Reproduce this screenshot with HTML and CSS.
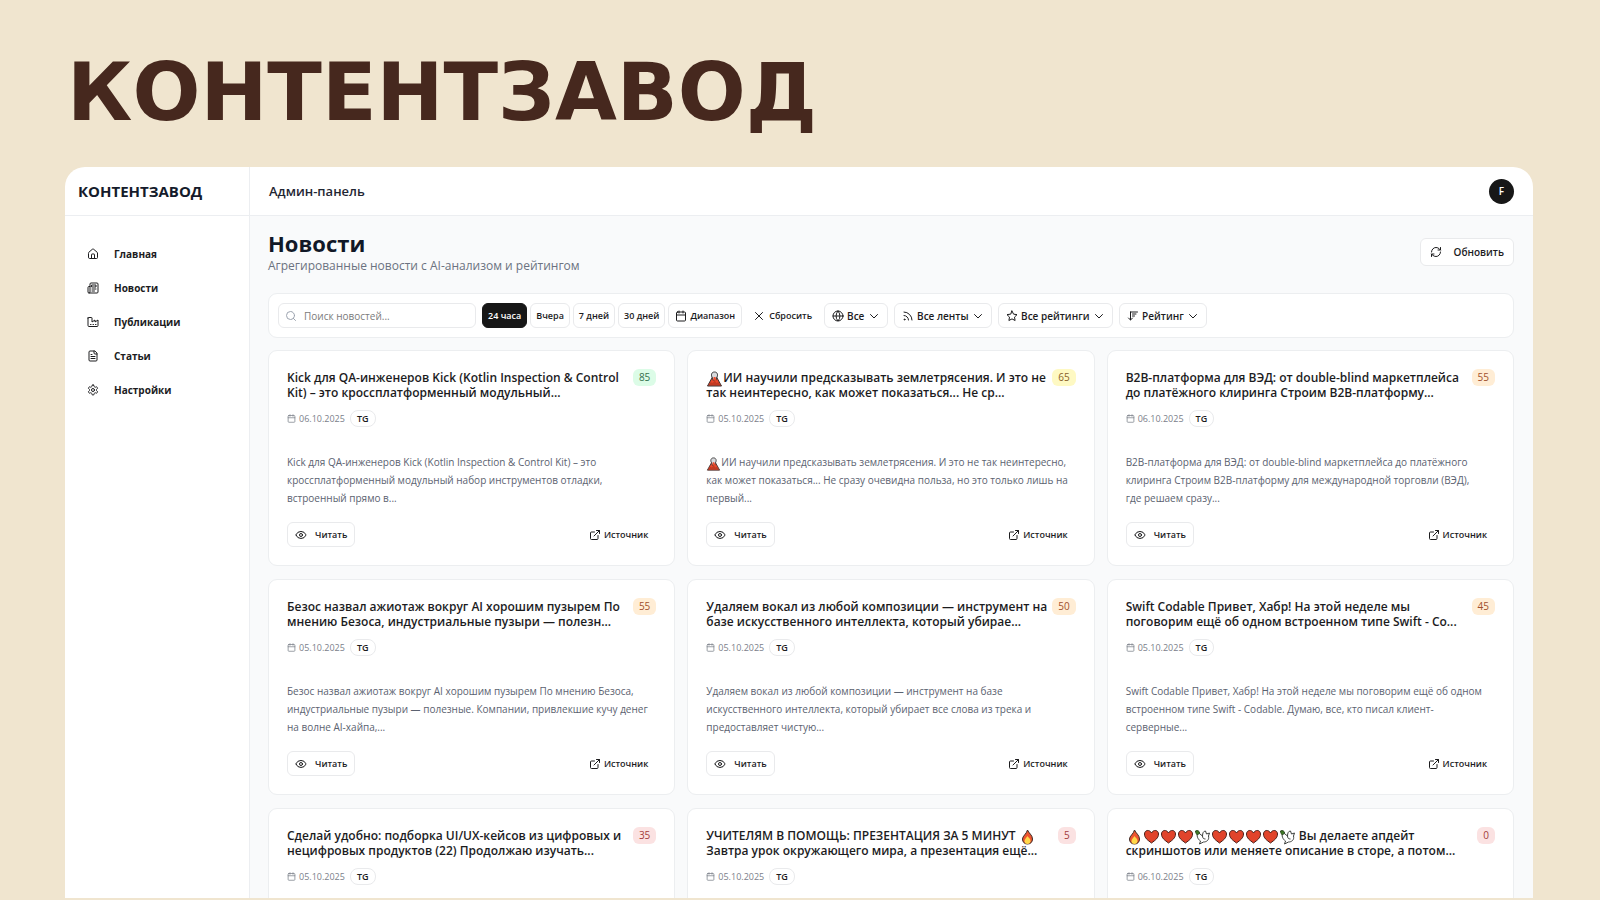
FILE: index.html
```html
<!DOCTYPE html>
<html lang="ru">
<head>
<meta charset="utf-8">
<meta name="viewport" content="width=device-width, initial-scale=1">
<title>Контентзавод</title>
<link rel="stylesheet" href="styles.css">
</head>
<body>
<svg class="sprite" aria-hidden="true">
  <symbol id="home" viewBox="0 0 24 24"><path d="M15 21v-8a1 1 0 0 0-1-1h-4a1 1 0 0 0-1 1v8"/><path d="M3 10a2 2 0 0 1 .7-1.500l7-6a2 2 0 0 1 2.600 0l7 6A2 2 0 0 1 21 10v9a2 2 0 0 1-2 2H5a2 2 0 0 1-2-2z"/></symbol>
  <symbol id="news" viewBox="0 0 24 24"><path d="M4 22h16a2 2 0 0 0 2-2V4a2 2 0 0 0-2-2H8a2 2 0 0 0-2 2v16a2 2 0 0 1-4 0v-9a2 2 0 0 1 2-2h2M18 14h-8M15 18h-5M10 6h8v4h-8z"/></symbol>
  <symbol id="factory" viewBox="0 0 24 24"><path d="M2 4v15a2 2 0 0 0 2 2h16a2 2 0 0 0 2-2V8l-6 4V8l-6 4V4a1 1 0 0 0-1-1H3a1 1 0 0 0-1 1zM17 17h1M12 17h1M7 17h1"/></symbol>
  <symbol id="file" viewBox="0 0 24 24"><path d="M15 2H6a2 2 0 0 0-2 2v16a2 2 0 0 0 2 2h12a2 2 0 0 0 2-2V7zM14 2v4a2 2 0 0 0 2 2h4M10 9H8M16 13H8M16 17H8"/></symbol>
  <symbol id="gear" viewBox="0 0 24 24"><path d="M12.220 2h-.44a2 2 0 0 0-2 2v.18a2 2 0 0 1-1 1.730l-.43.250a2 2 0 0 1-2 0l-.15-.08a2 2 0 0 0-2.730.730l-.22.380a2 2 0 0 0 .73 2.730l.15.100a2 2 0 0 1 1 1.720v.51a2 2 0 0 1-1 1.740l-.15.090a2 2 0 0 0-.73 2.730l.22.380a2 2 0 0 0 2.730.730l.15-.08a2 2 0 0 1 2 0l.43.250a2 2 0 0 1 1 1.730V20a2 2 0 0 0 2 2h.44a2 2 0 0 0 2-2v-.18a2 2 0 0 1 1-1.730l.43-.25a2 2 0 0 1 2 0l.15.080a2 2 0 0 0 2.730-.73l.22-.39a2 2 0 0 0-.73-2.730l-.15-.08a2 2 0 0 1-1-1.740v-.5a2 2 0 0 1 1-1.740l.15-.09a2 2 0 0 0 .73-2.730l-.22-.38a2 2 0 0 0-2.730-.73l-.15.080a2 2 0 0 1-2 0l-.43-.25a2 2 0 0 1-1-1.730V4a2 2 0 0 0-2-2z"/><circle cx="12" cy="12" r="3"/></symbol>
  <symbol id="refresh" viewBox="0 0 24 24"><path d="M3 12a9 9 0 0 1 9-9 9.750 9.750 0 0 1 6.740 2.740L21 8M21 3v5h-5M21 12a9 9 0 0 1-9 9 9.750 9.750 0 0 1-6.740-2.740L3 16M8 16H3v5"/></symbol>
  <symbol id="search" viewBox="0 0 24 24"><circle cx="11" cy="11" r="8"/><path d="m21 21-4.300-4.300"/></symbol>
  <symbol id="calendar" viewBox="0 0 24 24"><path d="M8 2v4M16 2v4M3 10h18"/><rect x="3" y="4" width="18" height="18" rx="2"/></symbol>
  <symbol id="close" viewBox="0 0 24 24"><path d="M19 5 5 19M5 5l14 14"/></symbol>
  <symbol id="globe" viewBox="0 0 24 24"><circle cx="12" cy="12" r="10"/><path d="M12 2a14.500 14.500 0 0 0 0 20 14.500 14.500 0 0 0 0-20M2 12h20"/></symbol>
  <symbol id="rss" viewBox="0 0 24 24"><path d="M4 11a9 9 0 0 1 9 9M4 4a16 16 0 0 1 16 16"/><circle cx="5" cy="19" r="1"/></symbol>
  <symbol id="star" viewBox="0 0 24 24"><path d="m12 2 3.100 6.300 6.900 1-5 4.900 1.200 6.800-6.200-3.200L5.800 21 7 14.200 2 9.300l6.900-1z"/></symbol>
  <symbol id="sort" viewBox="0 0 24 24"><path d="m3 16 4 4 4-4M7 20V4M7 4h14M11 8h7M11 12h4"/></symbol>
  <symbol id="chevron" viewBox="0 0 24 24"><path d="m5 9 7 7 7-7"/></symbol>
  <symbol id="eye" viewBox="0 0 24 24"><path d="M2 12.300a1 1 0 0 1 0-.7 10.750 10.750 0 0 1 19.900 0 1 1 0 0 1 0 .7 10.750 10.750 0 0 1-19.900 0"/><circle cx="12" cy="12" r="3"/></symbol>
  <symbol id="external" viewBox="0 0 24 24"><path d="M15 3h6v6M10 14 21 3M18 13v6a2 2 0 0 1-2 2H5a2 2 0 0 1-2-2V8a2 2 0 0 1 2-2h6"/></symbol>
  <symbol id="volcano" viewBox="0 0 16 16"><path d="M1 15 6 6h4l5 9z" fill="#e8472b" stroke="#3a3232"/><path d="M2 14h12l-2-3-2 1-2-3-2 3-2-1z" fill="#c23a22" stroke="none"/><path d="M6 7c-2-3-1-6 2-6s4 3 2 6l-1 3-1-2-1 2z" fill="#d8dadd" stroke="#333"/><path d="M7 6h2l1 5-2-2-1 3z" fill="#f04c2c" stroke="none"/></symbol>
  <symbol id="fire" viewBox="0 0 16 16"><path d="M8 1c1 3 5 5 5 9 0 3-2 5-5 5s-5-2-5-5c0-3 4-5 5-9z" fill="#ee5530" stroke="#3b2b25"/><path d="M8 7c1 2 3 2 3 5 0 1-1 3-3 3s-3-1-3-3c0-2 2-3 3-5z" fill="#ffd84a" stroke="none"/></symbol>
  <symbol id="heart" viewBox="0 0 16 16"><path d="M8 14C4 11 1 9 1 5c0-4 5-5 7-1 2-4 7-3 7 1 0 4-3 6-7 9z" fill="#e1442b" stroke="#4a211a"/></symbol>
  <symbol id="dove" viewBox="0 0 16 16"><path d="M3 3l5 4c0-3 1-5 3-5l1 3 3-1-1 3c1 4-2 6-5 6l-4 2 1-3c-3-2-4-5-3-9z" fill="#fff" stroke="#3d403d"/><path d="M1 2c2-1 4 0 4 2L3 6C2 5 1 4 1 2z" fill="#3f7c25" stroke="#2c4820"/><path d="M8 7c0 2 1 3 3 3" fill="none" stroke="#3d403d"/></symbol>
</svg>

<h1 class="poster-title">КОНТЕНТЗАВОД</h1>

<div class="app">
  <aside class="sidebar">
    <div class="brand">КОНТЕНТЗАВОД</div>
    <nav class="nav">
      <a href="#"><svg class="icon"><use href="#home"/></svg>Главная</a>
      <a href="#"><svg class="icon"><use href="#news"/></svg>Новости</a>
      <a href="#"><svg class="icon"><use href="#factory"/></svg>Публикации</a>
      <a href="#"><svg class="icon"><use href="#file"/></svg>Статьи</a>
      <a href="#"><svg class="icon"><use href="#gear"/></svg>Настройки</a>
    </nav>
  </aside>

  <div class="workspace">
    <header class="topbar">
      <span class="topbar-title">Админ-панель</span>
      <button class="avatar" type="button">F</button>
    </header>
    <main class="content">
      <div class="page-head">
        <div>
          <h2>Новости</h2>
          <p>Агрегированные новости с AI-анализом и рейтингом</p>
        </div>
        <button class="btn refresh" type="button"><svg class="icon"><use href="#refresh"/></svg>Обновить</button>
      </div>

      <div class="filters">
        <label class="search"><svg class="icon"><use href="#search"/></svg><input type="text" placeholder="Поиск новостей..." aria-label="Поиск новостей"></label>
        <div class="periods">
          <button class="btn active" type="button">24 часа</button>
          <button class="btn" type="button">Вчера</button>
          <button class="btn" type="button">7 дней</button>
          <button class="btn" type="button">30 дней</button>
          <button class="btn range" type="button"><svg class="icon"><use href="#calendar"/></svg>Диапазон</button>
        </div>
        <button class="btn ghost reset" type="button"><svg class="icon"><use href="#close"/></svg>Сбросить</button>
        <div class="selects">
          <label class="pick"><svg class="icon"><use href="#globe"/></svg><select aria-label="Источники"><option>Все</option></select><svg class="icon chevron"><use href="#chevron"/></svg></label>
          <label class="pick"><svg class="icon"><use href="#rss"/></svg><select aria-label="Ленты"><option>Все ленты</option></select><svg class="icon chevron"><use href="#chevron"/></svg></label>
          <label class="pick"><svg class="icon"><use href="#star"/></svg><select aria-label="Рейтинги"><option>Все рейтинги</option></select><svg class="icon chevron"><use href="#chevron"/></svg></label>
          <label class="pick"><svg class="icon"><use href="#sort"/></svg><select aria-label="Сортировка"><option>Рейтинг</option></select><svg class="icon chevron"><use href="#chevron"/></svg></label>
        </div>
      </div>

      <section class="cards">
        <article class="card">
          <div class="card-head"><h3>Kick для QA-инженеров Kick (Kotlin Inspection &amp; Control<br>Kit) – это кроссплатформенный модульный...</h3><span class="score green">85</span></div>
          <div class="meta"><svg class="icon"><use href="#calendar"/></svg><time>06.10.2025</time><span class="chip">TG</span></div>
          <p class="excerpt">Kick для QA-инженеров Kick (Kotlin Inspection &amp; Control Kit) – это<br>кроссплатформенный модульный набор инструментов отладки,<br>встроенный прямо в...</p>
          <div class="actions"><button class="btn read" type="button"><svg class="icon"><use href="#eye"/></svg>Читать</button><a class="source" href="#"><svg class="icon"><use href="#external"/></svg>Источник</a></div>
        </article>
        <article class="card">
          <div class="card-head"><h3><svg class="emoji"><use href="#volcano"/></svg>ИИ научили предсказывать землетрясения. И это не<br>так неинтересно, как может показаться... Не ср...</h3><span class="score yellow">65</span></div>
          <div class="meta"><svg class="icon"><use href="#calendar"/></svg><time>05.10.2025</time><span class="chip">TG</span></div>
          <p class="excerpt"><svg class="emoji"><use href="#volcano"/></svg>ИИ научили предсказывать землетрясения. И это не так неинтересно,<br>как может показаться... Не сразу очевидна польза, но это только лишь на<br>первый...</p>
          <div class="actions"><button class="btn read" type="button"><svg class="icon"><use href="#eye"/></svg>Читать</button><a class="source" href="#"><svg class="icon"><use href="#external"/></svg>Источник</a></div>
        </article>
        <article class="card">
          <div class="card-head"><h3>B2B-платформа для ВЭД: от double-blind маркетплейса<br>до платёжного клиринга Строим B2B-платформу...</h3><span class="score orange">55</span></div>
          <div class="meta"><svg class="icon"><use href="#calendar"/></svg><time>06.10.2025</time><span class="chip">TG</span></div>
          <p class="excerpt">B2B-платформа для ВЭД: от double-blind маркетплейса до платёжного<br>клиринга Строим B2B-платформу для международной торговли (ВЭД),<br>где решаем сразу...</p>
          <div class="actions"><button class="btn read" type="button"><svg class="icon"><use href="#eye"/></svg>Читать</button><a class="source" href="#"><svg class="icon"><use href="#external"/></svg>Источник</a></div>
        </article>
        <article class="card">
          <div class="card-head"><h3>Безос назвал ажиотаж вокруг AI хорошим пузырем По<br>мнению Безоса, индустриальные пузыри — полезн...</h3><span class="score orange">55</span></div>
          <div class="meta"><svg class="icon"><use href="#calendar"/></svg><time>05.10.2025</time><span class="chip">TG</span></div>
          <p class="excerpt">Безос назвал ажиотаж вокруг AI хорошим пузырем По мнению Безоса,<br>индустриальные пузыри — полезные. Компании, привлекшие кучу денег<br>на волне AI-хайпа,...</p>
          <div class="actions"><button class="btn read" type="button"><svg class="icon"><use href="#eye"/></svg>Читать</button><a class="source" href="#"><svg class="icon"><use href="#external"/></svg>Источник</a></div>
        </article>
        <article class="card">
          <div class="card-head"><h3>Удаляем вокал из любой композиции — инструмент на<br>базе искусственного интеллекта, который убирае...</h3><span class="score orange">50</span></div>
          <div class="meta"><svg class="icon"><use href="#calendar"/></svg><time>05.10.2025</time><span class="chip">TG</span></div>
          <p class="excerpt">Удаляем вокал из любой композиции — инструмент на базе<br>искусственного интеллекта, который убирает все слова из трека и<br>предоставляет чистую...</p>
          <div class="actions"><button class="btn read" type="button"><svg class="icon"><use href="#eye"/></svg>Читать</button><a class="source" href="#"><svg class="icon"><use href="#external"/></svg>Источник</a></div>
        </article>
        <article class="card">
          <div class="card-head"><h3>Swift Codable Привет, Хабр! На этой неделе мы<br>поговорим ещё об одном встроенном типе Swift - Co...</h3><span class="score orange">45</span></div>
          <div class="meta"><svg class="icon"><use href="#calendar"/></svg><time>05.10.2025</time><span class="chip">TG</span></div>
          <p class="excerpt">Swift Codable Привет, Хабр! На этой неделе мы поговорим ещё об одном<br>встроенном типе Swift - Codable. Думаю, все, кто писал клиент-<br>серверные...</p>
          <div class="actions"><button class="btn read" type="button"><svg class="icon"><use href="#eye"/></svg>Читать</button><a class="source" href="#"><svg class="icon"><use href="#external"/></svg>Источник</a></div>
        </article>
        <article class="card">
          <div class="card-head"><h3>Сделай удобно: подборка UI/UX-кейсов из цифровых и<br>нецифровых продуктов (22) Продолжаю изучать...</h3><span class="score red">35</span></div>
          <div class="meta"><svg class="icon"><use href="#calendar"/></svg><time>05.10.2025</time><span class="chip">TG</span></div>
        </article>
        <article class="card">
          <div class="card-head"><h3>УЧИТЕЛЯМ В ПОМОЩЬ: ПРЕЗЕНТАЦИЯ ЗА 5 МИНУТ <svg class="emoji"><use href="#fire"/></svg><br>Завтра урок окружающего мира, а презентация ещё...</h3><span class="score red">5</span></div>
          <div class="meta"><svg class="icon"><use href="#calendar"/></svg><time>05.10.2025</time><span class="chip">TG</span></div>
        </article>
        <article class="card">
          <div class="card-head"><h3><svg class="emoji"><use href="#fire"/></svg><svg class="emoji"><use href="#heart"/></svg><svg class="emoji"><use href="#heart"/></svg><svg class="emoji"><use href="#heart"/></svg><svg class="emoji"><use href="#dove"/></svg><svg class="emoji"><use href="#heart"/></svg><svg class="emoji"><use href="#heart"/></svg><svg class="emoji"><use href="#heart"/></svg><svg class="emoji"><use href="#heart"/></svg><svg class="emoji"><use href="#dove"/></svg> Вы делаете апдейт<br>скриншотов или меняете описание в сторе, а потом...</h3><span class="score red">0</span></div>
          <div class="meta"><svg class="icon"><use href="#calendar"/></svg><time>06.10.2025</time><span class="chip">TG</span></div>
        </article>
      </section>
    </main>
  </div>
</div>
</body>
</html>
```
FILE: styles.css
```css
* { box-sizing: border-box; }

body {
  margin: 0;
  height: 100vh;
  padding: 46px 67px 2px 65px;
  display: flex;
  flex-direction: column;
  overflow: hidden;
  background: #f0e5cf;
  color: #1c1c1e;
  font-family: "Open Sans", "Noto Sans", sans-serif;
  font-size: 10px;
}

h1, h2, h3, p { margin: 0; }
a { color: inherit; text-decoration: none; }
button, input, select { font: inherit; color: inherit; }
.sprite { display: none; }

.icon {
  width: 12px;
  height: 12px;
  flex: none;
  fill: none;
  stroke: currentColor;
  stroke-width: 2;
  stroke-linecap: round;
  stroke-linejoin: round;
}

.emoji {
  width: 17px;
  height: 16px;
  margin: -2px 0;
  vertical-align: -3px;
}

.poster-title {
  height: 121px;
  padding-left: 2px;
  color: #46281e;
  font: bold 80px/94px "DejaVu Sans", sans-serif;
}

.app {
  flex: 1;
  min-height: 0;
  display: flex;
  overflow: hidden;
  background: #fff;
  border-radius: 20px 20px 0 0;
}

.sidebar {
  width: 185px;
  flex: none;
  border-right: 1px solid #eceef1;
}

.brand {
  height: 49px;
  padding-left: 13px;
  border-bottom: 1px solid #eceef1;
  color: #141b2b;
  font-size: 15px;
  font-weight: 700;
  line-height: 49px;
}

.nav { padding: 21px 12px; }

.nav a {
  height: 34px;
  padding-left: 10px;
  display: flex;
  align-items: center;
  gap: 15px;
  font-size: 10px;
  font-weight: 700;
}

.workspace {
  flex: 1;
  min-width: 0;
  display: flex;
  flex-direction: column;
}

.topbar {
  height: 49px;
  flex: none;
  padding: 0 19px 0 19px;
  display: flex;
  align-items: center;
  justify-content: space-between;
  border-bottom: 1px solid #eceef1;
}

.topbar-title {
  color: #1f2633;
  font-size: 13px;
  font-weight: 600;
}

.avatar {
  width: 25px;
  height: 25px;
  padding: 0;
  border: 0;
  border-radius: 50%;
  background: #171717;
  color: #fff;
  font-size: 10px;
  font-weight: 600;
}

.content {
  flex: 1;
  min-height: 0;
  padding: 13px 19px 0 18px;
  overflow: hidden;
  background: #f9fafb;
}

.page-head {
  display: flex;
  align-items: center;
  justify-content: space-between;
}

.page-head h2 {
  color: #111827;
  font-size: 22px;
  font-weight: 700;
  line-height: 28px;
}

.page-head p {
  color: #6b7280;
  font-size: 12px;
  line-height: 18px;
}

.btn {
  height: 25px;
  padding: 0 5px;
  display: inline-flex;
  align-items: center;
  justify-content: center;
  gap: 3px;
  border: 1px solid #e9eaec;
  border-radius: 6px;
  background: #fff;
  font-size: 9px;
  font-weight: 600;
  white-space: nowrap;
}

.btn.refresh {
  height: 28px;
  padding: 0 9px;
  gap: 12px;
  font-size: 10px;
}

.btn.active {
  border-color: #171717;
  background: #171717;
  color: #fff;
}

.btn.range { padding: 0 6px; }

.btn.ghost {
  border-color: transparent;
  background: none;
}

.filters {
  margin: 18px 0 12px;
  padding: 9px;
  display: flex;
  align-items: center;
  border: 1px solid #eceef0;
  border-radius: 9px;
  background: #fff;
}

.search {
  width: 198px;
  height: 25px;
  margin-right: 6px;
  padding: 0 6px;
  display: flex;
  align-items: center;
  gap: 7px;
  border: 1px solid #e9eaec;
  border-radius: 6px;
  color: #9ca3af;
}

.search input {
  width: 100%;
  min-width: 0;
  padding: 0;
  border: 0;
  outline: 0;
  background: none;
  color: #1c1c1e;
}

.search input::placeholder { color: #7b7b7b; }

.periods { display: flex; gap: 3px; }
.btn.reset { padding: 0 11px 0 10px; gap: 4px; }

.selects { display: flex; gap: 6px; }

.pick {
  height: 25px;
  padding: 0 7px;
  display: flex;
  align-items: center;
  gap: 3px;
  border: 1px solid #e9eaec;
  border-radius: 6px;
  background: #fff;
}

.pick select {
  padding: 0;
  border: 0;
  outline: 0;
  appearance: none;
  background: none;
  font-size: 10px;
  font-weight: 600;
}

.cards {
  display: grid;
  grid-template-columns: repeat(3, minmax(0, 1fr));
  gap: 13px 12px;
}

.card {
  min-height: 215px;
  padding: 18px;
  border: 1px solid #eceef0;
  border-radius: 9px;
  background: #fff;
}

.card-head {
  display: flex;
  align-items: flex-start;
  justify-content: space-between;
}

.card h3 {
  padding-top: 1px;
  font-size: 12px;
  font-weight: 600;
  line-height: 15px;
  white-space: nowrap;
}

.score {
  padding: 0 6px;
  border-radius: 6px;
  font-size: 10px;
  line-height: 17px;
}

.green { background: #dcfce7; color: #35704c; }
.yellow { background: #fef9c3; color: #89612a; }
.orange { background: #ffedd5; color: #a04f2c; }
.red { background: #fbe2e2; color: #a33b3b; }

.meta {
  margin-top: 10px;
  height: 17px;
  display: flex;
  align-items: center;
  gap: 3px;
  color: #7b808a;
  font-size: 9px;
}

.meta .icon { width: 9px; height: 9px; }

.chip {
  height: 17px;
  margin-left: 2px;
  padding: 0 6px;
  border: 1px solid #e9eaec;
  border-radius: 8px;
  color: #1c1c1e;
  font-weight: 600;
  line-height: 15px;
}

.excerpt {
  margin-top: 26px;
  color: #5b6270;
  font-size: 10px;
  line-height: 18px;
  white-space: nowrap;
}

.excerpt .emoji { width: 15px; height: 14px; }

.actions {
  margin-top: 15px;
  display: flex;
  align-items: center;
  justify-content: space-between;
}

.btn.read { padding: 0 7px; gap: 8px; }

.source {
  padding-right: 8px;
  display: flex;
  align-items: center;
  gap: 3px;
  font-size: 9px;
  font-weight: 600;
}
```
